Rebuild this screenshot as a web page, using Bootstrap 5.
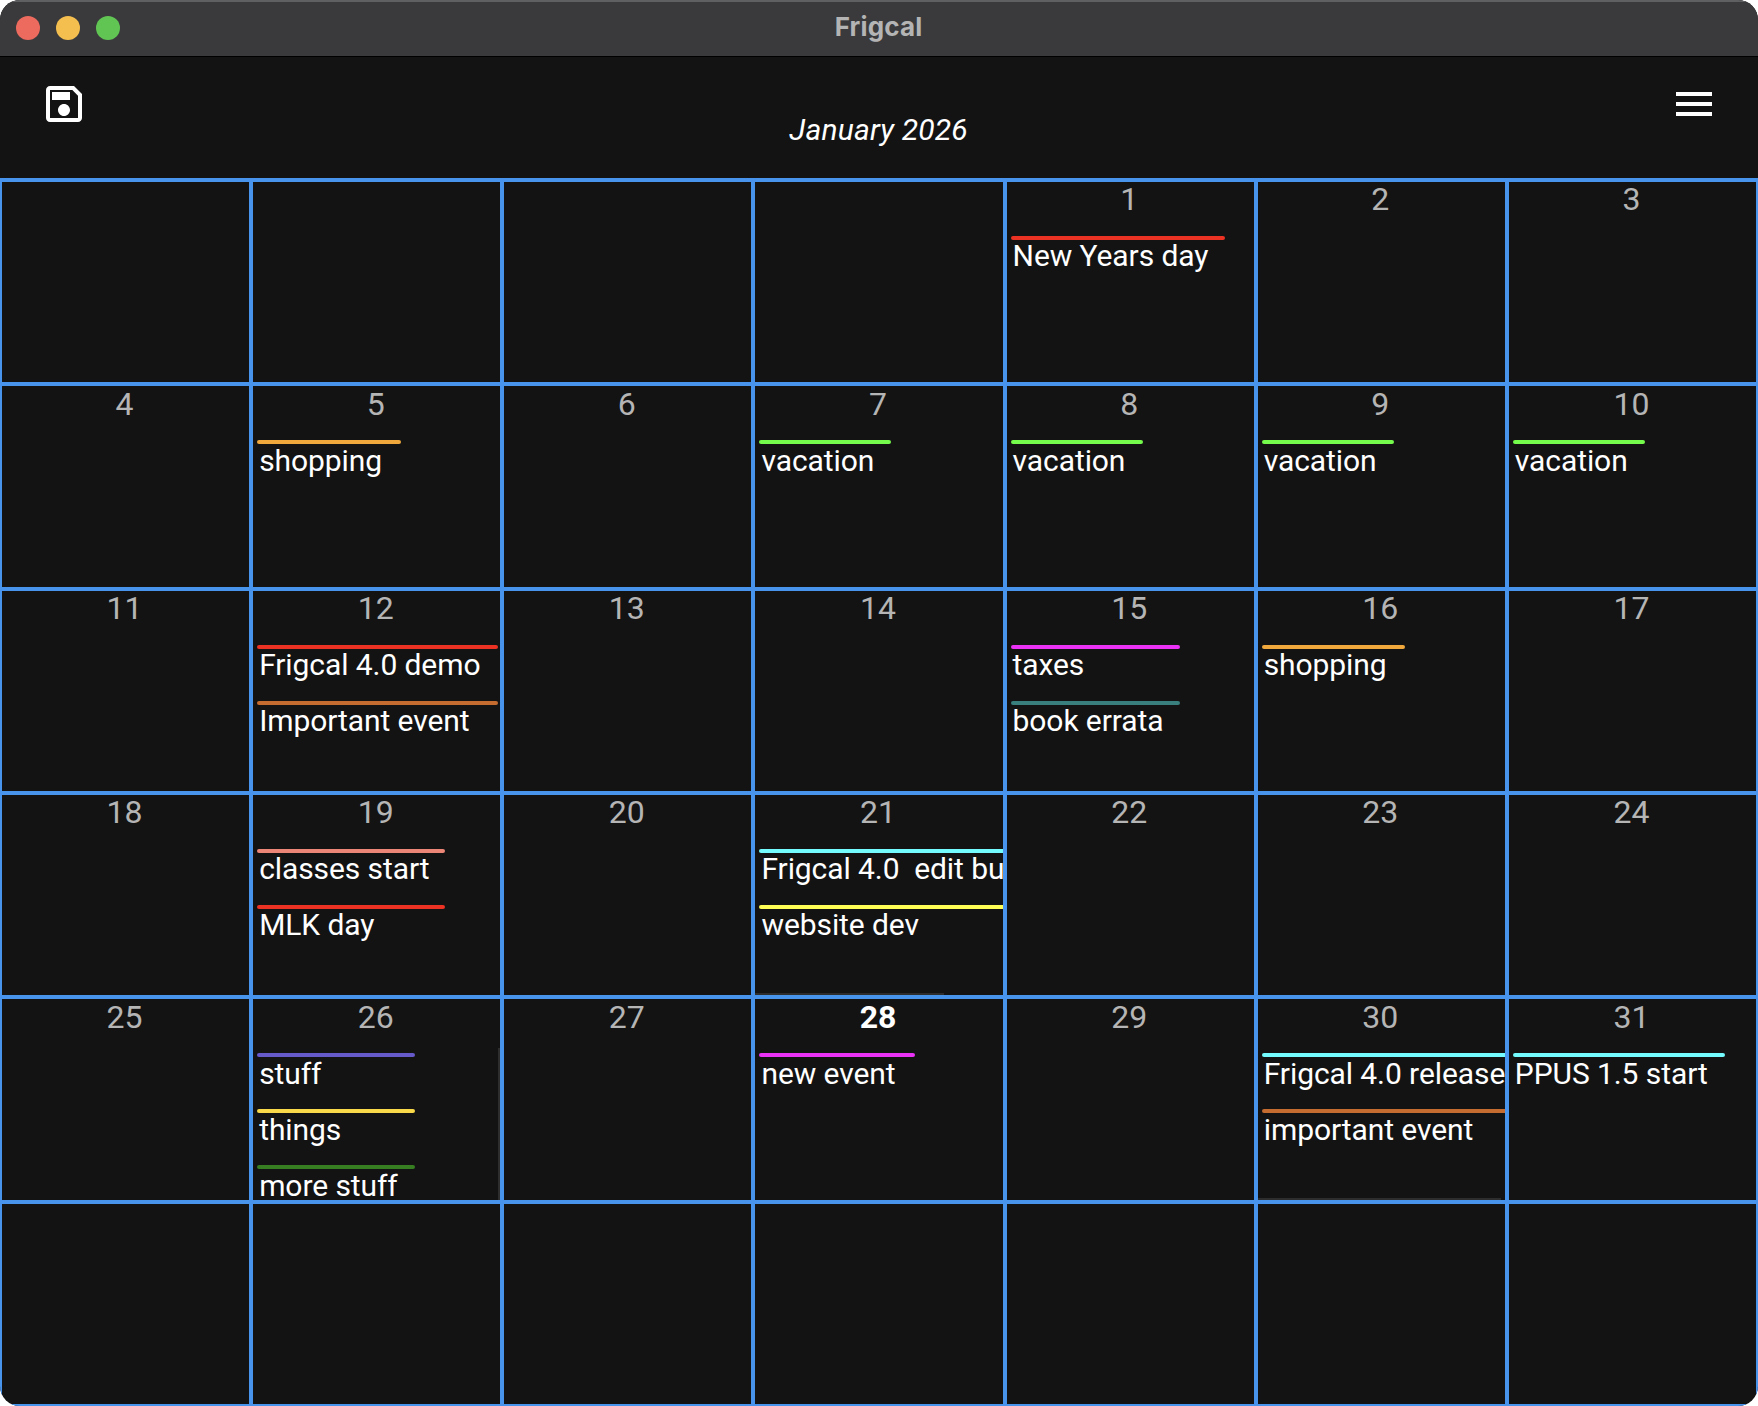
<!DOCTYPE html>
<html lang="en">
<head>
  <meta charset="UTF-8" />
  <meta name="viewport" content="width=device-width, initial-scale=1" />
  <title>Frigcal</title>
  <link href="https://cdn.jsdelivr.net/npm/bootstrap@5.3.0/dist/css/bootstrap.min.css" rel="stylesheet" />
  <style>
    body { background: #fff; font-family: Roboto, sans-serif; }
    .app-window { height: 1406px; border-radius: 20px; background: #131313; }
    .title-bar { height: 57px; background: #3a3a3c; border-top: 2px solid #5f6062; border-bottom: 1px solid #000; }
    .title-bar .lights { width: 121px; padding: 0 0 2px 16px; }
    .title-bar .lights:last-child { width: 122px; }
    .light { width: 24px; height: 24px; border-radius: 50%; }
    .app-name { font: 700 26px/34px Inter, sans-serif; letter-spacing: .15px; color: #b4b4b5; }
    .top-bar { height: 123px; padding: 23px 40px 0; border-bottom: 2px solid #4894ed; }
    .top-bar svg { width: 48px; height: 48px; fill: #fff; }
    .month-name { font-size: 30px; line-height: 36px; letter-spacing: .15px; margin: 32px 1px 0 0; color: #fff; }
    .month-grid { display: grid; grid-template-columns: repeat(7, 1fr); grid-template-rows: repeat(6, 1fr); min-height: 0; }
    .day-cell { border: 2px solid #4894ed; min-width: 0; min-height: 0; }
    .day-num { font-size: 32px; line-height: 34px; height: 54px; color: #b5b5b5; padding: .3px 2px 0 0; }
    .day-num.today { color: #fff; font-weight: 700; }
    .event-item { height: 56px; padding-left: 4px; }
    .event-bar { height: 4px; border-radius: 2px; }
    .event-text { font-size: 30px; line-height: 32px; letter-spacing: -.08px; padding: .3px 0 0 2px; color: #fff; white-space: pre; }
    .scroll-x { height: 2px; left: 0; bottom: 0; background: #2d2d2d; }
    .scroll-y { width: 2px; right: 0; bottom: 0; background: #2d2d2d; }
  </style>
</head>
<body>

  <div class="app-window d-flex flex-column overflow-hidden">
    <!-- Title bar -->
    <div class="title-bar d-flex justify-content-between flex-shrink-0">
      <div class="lights d-flex align-items-center">
        <span class="light me-3" style="background: #ed6a5e"></span>
        <span class="light me-3" style="background: #f5bf4f"></span>
        <span class="light" style="background: #61c554"></span>
      </div>
      <div class="app-name pt-2">Frigcal</div>
      <div class="lights"></div>
    </div>

    <!-- Toolbar -->
    <div class="top-bar d-flex justify-content-between flex-shrink-0">
      <svg viewBox="0 0 24 24"><path d="M17 3H5C3.89 3 3 3.9 3 5V19C3 20.1 3.89 21 5 21H19C20.1 21 21 20.1 21 19V7L17 3M19 19H5V5H16.17L19 7.83V19M12 12C10.34 12 9 13.34 9 15S10.34 18 12 18 15 16.66 15 15 13.66 12 12 12M6 6H15V10H6V6Z" /></svg>
      <div class="month-name fst-italic">January 2026</div>
      <svg viewBox="0 0 24 24"><path d="M3 6H21V8H3V6M3 11H21V13H3V11M3 16H21V18H3V16Z" /></svg>
    </div>

    <!-- Days -->
    <div class="month-grid flex-grow-1" id="monthGrid"></div>
  </div>

  <script src="https://cdn.jsdelivr.net/npm/bootstrap@5.3.0/dist/js/bootstrap.bundle.min.js"></script>
  <script>
    const firstWeekday = 4;
    const daysInMonth = 31;
    const today = 28;

    // width: length of the bars, scrollX / scrollY: length of the scroll bar
    const events = {
      1: { width: 214, items: [["New Years day", "#eb3223"]] },
      5: { width: 144, items: [["shopping", "#f0a83c"]] },
      7: { width: 132, items: [["vacation", "#75fb4c"]] },
      8: { width: 132, items: [["vacation", "#75fb4c"]] },
      9: { width: 132, items: [["vacation", "#75fb4c"]] },
      10: { width: 132, items: [["vacation", "#75fb4c"]] },
      12: { width: 241, items: [["Frigcal 4.0 demo", "#eb3223"], ["Important event", "#c56c30"]] },
      15: { width: 169, items: [["taxes", "#e932f5"], ["book errata", "#387f7e"]] },
      16: { width: 143, items: [["shopping", "#f0a83c"]] },
      19: { width: 188, items: [["classes start", "#ec8677"], ["MLK day", "#eb3223"]] },
      21: { width: 320, scrollX: 189, items: [["Frigcal 4.0  edit bu", "#73fbfd"], ["website dev", "#fffe54"]] },
      26: { width: 158, scrollY: 152, items: [["stuff", "#6659c9"], ["things", "#f9d849"], ["more stuff", "#377e22"]] },
      28: { width: 156, items: [["new event", "#e932f5"]] },
      30: { width: 250, scrollX: 243, items: [["Frigcal 4.0 release", "#73fbfd"], ["important event", "#c56c30"]] },
      31: { width: 212, items: [["PPUS 1.5 start", "#73fbfd"]] }
    };

    function renderMonth() {
      const grid = document.getElementById("monthGrid");

      for (let i = 0; i < 42; i++) {
        const day = i - firstWeekday + 1;
        const cell = document.createElement("div");
        cell.className = "day-cell position-relative overflow-hidden";

        if (day >= 1 && day <= daysInMonth) {
          const data = events[day] || { items: [] };
          cell.innerHTML = `<div class="day-num text-center ${day === today ? "today" : ""}">${day}</div>`;

          data.items.forEach(([name, color]) => {
            cell.innerHTML += `
              <div class="event-item">
                <div class="event-bar" style="width: ${data.width}px; background: ${color}"></div>
                <div class="event-text">${name}</div>
              </div>`;
          });

          if (data.scrollX) {
            cell.innerHTML += `<div class="scroll-x position-absolute" style="width: ${data.scrollX}px"></div>`;
          }
          if (data.scrollY) {
            cell.innerHTML += `<div class="scroll-y position-absolute" style="height: ${data.scrollY}px"></div>`;
          }
        }
        grid.appendChild(cell);
      }
    }

    renderMonth();
  </script>

</body>
</html>
